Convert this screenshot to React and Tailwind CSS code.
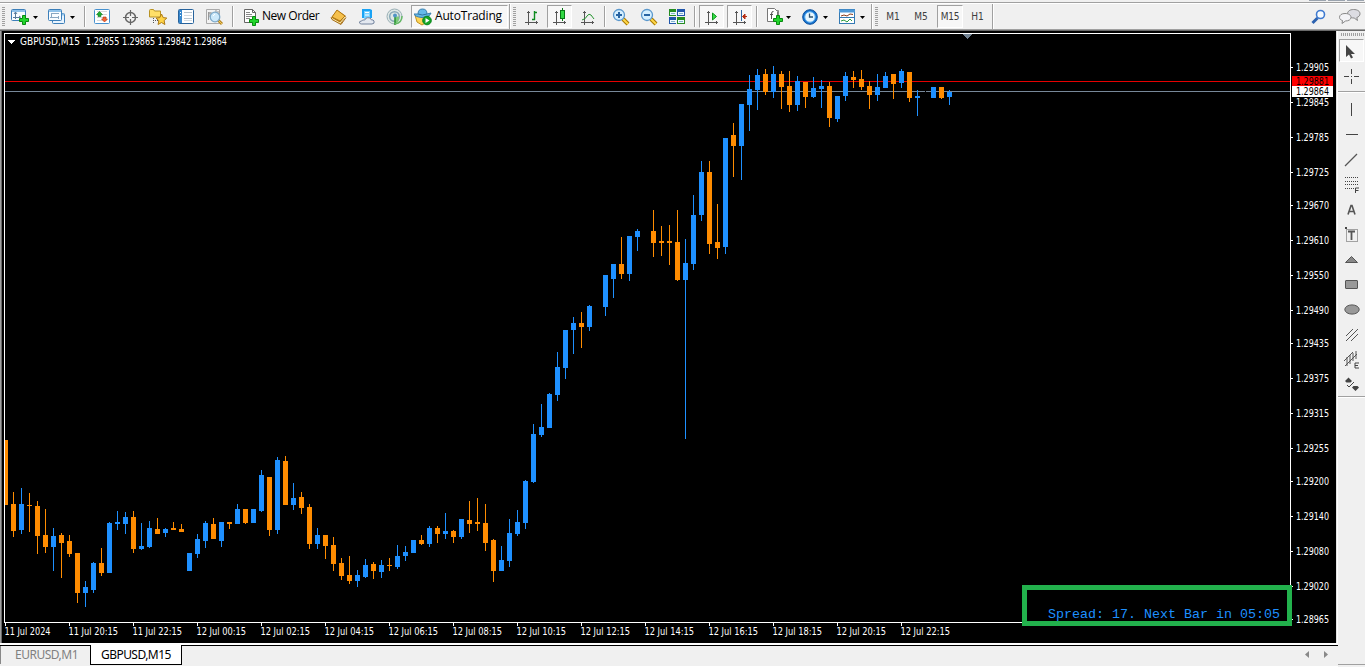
import React from "react";

/* Candles: [slot, colour, high, low, bodyTop, bodyBottom] */
const CANDLES = [
  [1,"o",492,537,504,531],[2,"b",488,534,504,530],[3,"o",493,532,505,506],
  [4,"o",501,554,506,536],[5,"o",509,553,535,547],[6,"b",528,571,536,547],[7,"o",533,578,535,543],
  [8,"o",535,557,541,554],[9,"o",553,603,553,593],[10,"b",581,607,587,593],[11,"b",562,593,563,590],
  [12,"o",548,576,563,573],[13,"b",522,573,523,573],[14,"b",511,530,522,524],[15,"b",512,534,517,524],
  [16,"o",511,553,517,549],[17,"b",523,550,546,549],[18,"b",521,548,528,547],[19,"o",518,534,529,534],
  [20,"b",528,537,529,533],[21,"o",522,530,528,530],[22,"o",524,532,529,532],[23,"b",553,571,553,571],
  [24,"b",534,558,539,554],[25,"b",521,548,523,541],[26,"o",518,539,524,539],[27,"b",522,547,522,541],
  [28,"o",522,529,522,524],[29,"b",504,524,509,524],[30,"o",509,524,509,523],[31,"b",509,523,509,523],
  [32,"b",470,512,475,511],[33,"o",477,536,477,530],[34,"b",457,534,460,530],[35,"o",456,505,461,505],
  [36,"b",483,510,498,505],[37,"o",492,514,497,508],[38,"o",504,549,507,544],[39,"b",528,549,535,544],
  [40,"o",535,559,535,546],[41,"o",537,571,545,564],[42,"o",558,580,563,576],[43,"o",556,584,575,581],
  [44,"b",570,587,575,581],[45,"b",559,578,565,577],[46,"o",562,579,564,571],[47,"b",560,578,565,572],
  [48,"o",558,571,565,566],[49,"b",545,569,556,567],[50,"b",546,561,552,556],[51,"b",540,553,540,553],
  [52,"o",535,545,540,544],[53,"b",526,547,528,544],[54,"o",526,543,528,534],[55,"b",513,539,531,534],
  [56,"o",530,543,531,537],[57,"b",519,539,519,537],[58,"o",501,533,520,524],[59,"o",498,531,522,524],
  [60,"o",504,551,523,543],[61,"o",539,582,540,571],[62,"b",546,571,560,571],[63,"b",519,567,533,561],
  [64,"b",510,536,522,534],[65,"b",480,529,481,523],[66,"b",424,483,434,482],[67,"b",404,437,427,435],
  [68,"b",393,428,394,428],[69,"b",352,401,367,395],[70,"b",330,379,330,368],[71,"b",317,354,323,330],
  [72,"o",312,348,323,327],[73,"b",305,331,306,327],[75,"b",275,316,275,307],[76,"b",264,298,264,279],
  [77,"o",237,279,264,274],[78,"b",236,281,236,274],[79,"b",229,251,231,237],[81,"o",210,257,231,243],
  [82,"o",226,256,241,243],[83,"o",225,265,241,243],[84,"o",210,281,242,280],[85,"b",239,439,263,280],
  [86,"b",195,270,215,264],[87,"b",161,221,172,215],[88,"o",161,254,172,244],[89,"o",204,259,242,248],
  [90,"b",138,254,138,247],[91,"o",123,177,135,146],[92,"b",104,180,104,146],[93,"b",75,131,89,105],
  [94,"b",69,110,75,90],[95,"o",69,95,74,92],[96,"b",66,98,74,92],[97,"o",71,109,74,87],
  [98,"o",71,112,86,105],[99,"b",76,111,81,105],[100,"o",82,108,82,97],[101,"b",77,98,88,97],
  [102,"b",80,108,86,89],[103,"o",82,127,86,118],[104,"b",96,122,96,119],[105,"b",72,101,76,96],
  [106,"o",71,88,77,80],[107,"o",70,90,79,87],[108,"o",81,109,86,95],[109,"b",74,101,87,95],
  [110,"b",72,88,76,88],[111,"o",74,99,74,84],[112,"b",69,88,71,83],[113,"o",72,102,72,98],
  [114,"b",90,116,96,98],[116,"b",87,98,87,98],[117,"o",87,99,87,98],[118,"b",90,105,92,97],
];
const COLOR = { o: "#ff8c00", b: "#1e90ff" };

const PRICES = [
  [67,"1.29905"],[102,"1.29845"],[137,"1.29785"],[172,"1.29725"],[205,"1.29670"],[240,"1.29610"],
  [275,"1.29550"],[310,"1.29490"],[343,"1.29435"],[378,"1.29375"],[413,"1.29315"],[448,"1.29255"],
  [481,"1.29200"],[516,"1.29140"],[551,"1.29080"],[586,"1.29020"],[619,"1.28965"],
];
const TIMES = [
  "11 Jul 2024","11 Jul 20:15","11 Jul 22:15","12 Jul 00:15","12 Jul 02:15","12 Jul 04:15","12 Jul 06:15",
  "12 Jul 08:15","12 Jul 10:15","12 Jul 12:15","12 Jul 14:15","12 Jul 16:15","12 Jul 18:15","12 Jul 20:15","12 Jul 22:15",
];

function Label({ x, y, w, fill = "#fff", children }) {
  return (
    <text x={x} y={y} textLength={w} lengthAdjust="spacingAndGlyphs" fill={fill} className="font-['DejaVu_Sans_Condensed','DejaVu_Sans',sans-serif] text-[10.5px]">
      {children}
    </text>
  );
}

function Chart() {
  return (
    <svg width="1335" height="612" viewBox="2 31 1335 612" className="block" shapeRendering="crispEdges">
      <rect x="2" y="31" width="1335" height="612" fill="#000" />
      <rect x="5" y="81" width="1285" height="1" fill="#e60000" />
      <rect x="5" y="91" width="1285" height="1" fill="#778899" />
      <rect x="925" y="91" width="1" height="1" fill="#000" />
      <rect x="5" y="440" width="3" height="65" fill="#ff8c00" />
      {CANDLES.map(([i, c, hi, lo, top, bot]) => (
        <g key={i} fill={COLOR[c]}>
          <rect x={5 + 8 * i} y={hi} width="1" height={lo - hi} />
          <rect x={3 + 8 * i} y={top} width="5" height={bot - top} />
        </g>
      ))}
      <path d="M4 33h1287v1H4zM4 33h1v590H4zM1290 33h1v590h-1zM4 622h1287v1H4z" fill="#fff" />
      <path d="M962 34h10l-5 5z" fill="#708090" />
      <path d="M8 40h7l-3.5 4z" fill="#fff" />
      <Label x="20" y="45" w="60">GBPUSD,M15</Label>
      <Label x="86" y="45" w="141">1.29855 1.29865 1.29842 1.29864</Label>
      {PRICES.map(([y, t]) => (
        <g key={t}>
          <rect x="1291" y={y} width="2" height="1" fill="#fff" />
          <Label x="1296" y={y + 4} w="33">{t}</Label>
        </g>
      ))}
      <rect x="1292" y="76" width="41" height="10" fill="#f00" />
      <Label x="1296" y="85" w="33" fill="#000">1.29881</Label>
      <rect x="1292" y="86" width="41" height="11" fill="#fff" />
      <Label x="1296" y="95" w="33" fill="#000">1.29864</Label>
      {TIMES.map((t, i) => (
        <g key={i}>
          <rect x={5 + 64 * i} y="623" width="1" height="3" fill="#fff" />
          <Label x={4.5 + 64 * i} y="635" w={i === 0 ? 46 : 49.5}>{t}</Label>
        </g>
      ))}
      <rect x="1024.5" y="587.5" width="265" height="36" fill="none" stroke="#22b14c" strokeWidth="5" />
      <text x="1048" y="618" textLength="232" fill="#1e90ff" className="font-['Liberation_Mono',monospace] text-[13.33px]">
        Spread: 17. Next Bar in 05:05
      </text>
    </svg>
  );
}

function Icon({ className = "", children, w = 18, h = 18 }) {
  return (
    <svg width={w} height={h} viewBox={`0 0 ${w} ${h}`} className={`block shrink-0 ${className}`} fill="none">
      {children}
    </svg>
  );
}
const Plus = ({ x = 8, y = 7 }) => (
  <path transform={`translate(${x} ${y})`} d="M3.5.5h3v3h3v3h-3v3h-3v-3h-3v-3h3z" fill="#22d52c" stroke="#078a10" />
);
const Caret = ({ className }) => (
  <Icon w={7} h={18} className={className}><path d="M1 8h5L3.5 11z" fill="#000" /></Icon>
);
const Sep = ({ className }) => <div className={`h-[21px] w-[2px] shrink-0 border-l border-[#a0a0a0] bg-white ${className}`} />;
const Edge = ({ className }) => <div className={`h-[26px] w-[2px] shrink-0 border-l border-[#a0a0a0] bg-white ${className}`} />;
const Grip = ({ className }) => (
  <Icon w={3} h={19} className={className}>
    <path d="M1.5 0v19" stroke="#a0a0a0" strokeWidth="3" strokeDasharray="1 1" />
  </Icon>
);
const Pressed = ({ className, children }) => (
  <div className={`flex h-[23px] shrink-0 items-center border border-t-[#a0a0a0] border-l-[#a0a0a0] border-r-white border-b-white bg-[#f7f7f7] ${className}`}>
    {children}
  </div>
);
const Axes = ({ children, className }) => (
  <Icon className={className}>
    <path d="M4.5 3v14M1 14.5h13" stroke="#555" />
    <path d="M3 4.500h3M12.500 13v3" stroke="#555" />
    {children}
  </Icon>
);
const Page = () => (
  <>
    <path d="M2.5 1.5h8l3 3v10h-11z" fill="#fff" stroke="#666" />
    <path d="M10.500 1.500v3h3" stroke="#666" />
    <path d="M4 6.500h6M4 8.500h6M4 10.500h4M4 4.500h4" stroke="#888" />
  </>
);
const Zoom = ({ plus, className }) => (
  <Icon className={className}>
    <path d="M11 11l5 5" stroke="#a87800" strokeWidth="4" />
    <path d="M11 11l5 5" stroke="#ffd84a" strokeWidth="2" />
    <circle cx="7" cy="7" r="5.5" fill="#d5efff" stroke="#5b98cd" strokeWidth="1.3" />
    <path d={plus ? "M4 7h6M7 4v6" : "M4 7h6"} stroke="#2864a3" strokeWidth="2" />
  </Icon>
);

function Toolbar() {
  return (
    <header className="flex h-[31px] w-full flex-col bg-[#f0f0f0]">
      <div className="flex h-[2px] justify-end gap-[2px] pr-px">
        <i className="h-px w-[17px] bg-[#9aa3ae]" /><i className="h-px w-[17px] bg-[#9aa3ae]" /><i className="h-px w-[17px] bg-[#9aa3ae]" />
      </div>
      <div className="h-px bg-[#a0a0a0]" />
      <div className="h-px bg-white" />
      <div className="flex h-[25px] items-center">
        <Grip className="ml-[2px]" />
        <Icon className="ml-[6px]">
          <rect x=".5" y="1.500" width="14" height="11" rx="1" fill="#f8fcff" stroke="#3c7fb9" /><path d="M1 3h13" stroke="#8fc2ea" strokeWidth="2" />
          <path d="M3 6l1.500-2L6 6M4.500 4v7M2 9.500h7M8 8l2 1.500" stroke="#587c9c" />
          <Plus />
        </Icon>
        <Caret className="ml-[3px]" />
        <Icon className="ml-[9px]">
          <rect x="4.500" y="5.500" width="12" height="10" rx="1" fill="#e8f4ff" stroke="#3c7fb9" />
          <rect x=".5" y="1.500" width="13" height="11" rx="1" fill="#f8fcff" stroke="#3c7fb9" /><path d="M1 3h12M14 6.500h2" stroke="#8fc2ea" strokeWidth="2" />
          <path d="M3.500 5v5M2 9.500h9M4 5.500h7M10.500 8v3" stroke="#88a7c2" />
        </Icon>
        <Caret className="ml-[3px]" />
        <Sep className="ml-[8px]" />
        <Icon className="ml-[7px]">
          <rect x="1.500" y="1.500" width="15" height="14" rx="1" fill="#fff" stroke="#4691cf" />
          <path d="M4 3.500h10M4 6.500h10M4 9.500h10M4 12.500h10" stroke="#d8d8d8" />
          <path d="M6.500 3.500L9.500 6.500H8v2H5v-2H3.500z" fill="#20ac30" stroke="#087817" strokeWidth=".6" />
          <path d="M11.500 14l3-3H13V9h-3v2H8.500z" fill="#f46432" stroke="#b7340c" strokeWidth=".6" />
        </Icon>
        <Icon className="ml-[11px]">
          <circle cx="8.500" cy="9.500" r="5" stroke="#666" strokeWidth="1.500" />
          <path d="M8.500 2v6M8.500 11v6M1 9.500h6M10 9.500h6" stroke="#666" strokeWidth="1.200" />
        </Icon>
        <Icon className="ml-[9px]">
          <path d="M.5 2.500q0-1 1-1h3l1 1.500h6v6h-11z" fill="#ffdf68" stroke="#b89324" />
          <path d="M4.500 10v6M6 12.500h3" stroke="#555" strokeDasharray="1 1" />
          <path d="M12.500 6l1.700 3.600 3.600.5-2.700 2.500.8 3.900-3.400-2-3.400 2 .7-3.900L7 10.100l3.800-.5z" fill="#ffd447" stroke="#ad7a13" />
        </Icon>
        <Icon className="ml-[10px]">
          <rect x="1.500" y="1.500" width="15" height="14" rx="1" fill="#fff" stroke="#27639c" />
          <rect x="2" y="2" width="3" height="13" fill="#3888ce" />
          <path d="M7 4.500h8M7 10.500h8" stroke="#b6c3ce" /><path d="M7 7.500h8M7 12.500h8" stroke="#d5dbe0" />
          <path d="M3 4.500h1M3 7.500h1" stroke="#fff" />
        </Icon>
        <Icon className="ml-[11px]">
          <path d="M.5 1.500h13v14H.5z" fill="#f2f2f2" stroke="#aaa" /><path d="M2.500 12V4M4 9V4M10 5V2M12 8V3M2 5h4" stroke="#999" />
          <path d="M12 12l4 4" stroke="#b58727" strokeWidth="3" /><path d="M12 12l4 4" stroke="#f2ca59" />
          <circle cx="9" cy="9" r="4.800" fill="#cde9fa" stroke="#7da9c9" strokeWidth="1.300" /><path d="M7 8l2-2" stroke="#fff" />
        </Icon>
        <Sep className="ml-[8px]" />
        <Icon className="ml-[8px]"><Page /><Plus x={7} y={8} /></Icon>
        <span className="ml-[2px] w-[58px] shrink-0 whitespace-nowrap pb-px font-['Open_Sans','Noto_Sans',sans-serif] text-[12px] leading-4 tracking-[-0.46px] text-black">New Order</span>
        <Icon className="ml-[10px]">
          <path d="M1 10l6-8 9 6-5 8z" fill="#b27816" /><path d="M2 9l5-7 8 6-5 5z" fill="#f5c04c" stroke="#b27914" />
          <path d="M2 10.500l8 4.500 5-6" stroke="#fff0b0" /><path d="M1 9.500l1 2 9 5 5-7" stroke="#a46b10" />
        </Icon>
        <Icon className="ml-[10px]">
          <path d="M4 1l8 0 2 1v8H4z" fill="#1aa3f5" /><path d="M6 3h6v8H6z" fill="#75cfff" /><path d="M7 4.500h4M7 7h4" stroke="#fff" />
          <path d="M3.500 16h10.500q3-.3 2-3-.7-1.600-2.500-1-1-3-4-2.300-2 .2-2.700 2.300Q4 11.500 3.700 13 1 13 1.500 15q.5 1 2 1z" fill="#e3e8f0" stroke="#73839d" />
        </Icon>
        <Icon className="ml-[10px]">
          <circle cx="8.500" cy="8.500" r="7.500" fill="#dfe8e6" stroke="#9aafb5" /><circle cx="8.500" cy="8.500" r="4.800" stroke="#8ba9b8" strokeWidth="1.500" />
          <path d="M9 8.500h4q1 5-4 8z" fill="#7cc97b" /><path d="M9 7v10" stroke="#289331" strokeWidth="1.500" /><circle cx="9" cy="7.500" r="2" fill="#5195c5" />
          <path d="M9 16q7-1 7-8" stroke="#66ba66" strokeWidth="1.500" />
        </Icon>
        <Pressed className="ml-[7px] w-[97px]">
          <Icon className="ml-[2px]">
            <path d="M1 7h14l-2 7-5 3-5-3z" fill="#ffd457" stroke="#c09423" />
            <path d="M0 6q1 3 8 3.500Q16 9 17 5l-4 1q0-5-4.500-5Q4 1 4 6z" fill="#66b9ea" stroke="#397fae" /><path d="M4 6q4 2 9 0" stroke="#2f749f" />
            <circle cx="13" cy="12.500" r="4.300" fill="#16a525" stroke="#08851b" /><path d="M11.500 10v5l4-2.500z" fill="#fff" />
          </Icon>
          <span className="ml-[3px] whitespace-nowrap pb-px font-['Open_Sans','Noto_Sans',sans-serif] text-[12px] leading-4 tracking-[-0.18px] text-black">AutoTrading</span>
        </Pressed>
        <Edge className="ml-px" />
        <Grip className="ml-[2px]" />
        <Axes className="ml-[8px]"><path d="M10.500 3v9M10 4.500h3M8 11.500h3" stroke="#0d8b1e" strokeWidth="1.400" /></Axes>
        <Pressed className="ml-[5px] w-[25px]"><Axes className="ml-[4px]"><path d="M10.500 0v13" stroke="#077714" /><rect x="8.500" y="2.500" width="4" height="8" fill="#31d843" stroke="#077714" /></Axes></Pressed>
        <Axes className="ml-[8px]"><path d="M2 12q4-1 5-4 2-3 4-1l3 4" stroke="#25942f" /></Axes>
        <Sep className="ml-[6px]" />
        <Zoom plus className="ml-[6px]" />
        <Zoom className="ml-[10px]" />
        <Icon className="ml-[10px]">
          <path d="M1 1h8v7H1z" fill="#268d22" /><path d="M9 1h8v7H9zM1 9h8v7H1z" fill="#2056ac" />
          <path d="M9 9h8v7H9z" fill="#268d22" />
          <path d="M2 4h6v3H2zM10 4h6v3h-6zM2 12h6v3H2zM10 12h6v3h-6z" fill="#eef8ff" />
          <path d="M3 5.500h4M11 5.500h4M3 13.500h4M11 13.500h4" stroke="#83b3cb" />
          <path d="M8.500 1v15" stroke="#f0f0f0" />
        </Icon>
        <Sep className="ml-[8px]" />
        <Pressed className="ml-[3px] w-[25px]"><Axes className="ml-[4px]"><path d="M8.500 5v7l4-3.500z" fill="#36dc47" stroke="#0a951a" /></Axes></Pressed>
        <Pressed className="ml-[3px] w-[25px]"><Axes className="ml-[4px]"><path d="M9.500 2v11" stroke="#3165a0" /><path d="M15 8.500h-4M13 6l-2.500 2.500L13 11z" fill="#c63718" stroke="#b42c13" /></Axes></Pressed>
        <Sep className="ml-[4px]" />
        <Icon className="ml-[7px]"><path d="M4.500 2.500h9v11h-9z" fill="#fff" stroke="#888" /><path d="M2.500.5h7l3 3v10h-10z" fill="#fff" stroke="#777" /><path d="M8.500 3.500Q6.500 3 6.500 6v5M5 6.500h3" stroke="#555" /><Plus x={8} y={7} /></Icon>
        <Caret className="ml-[2px]" />
        <Icon className="ml-[9px]">
          <circle cx="9" cy="9" r="7.300" fill="#1673d0" stroke="#0c519d" /><circle cx="9" cy="9" r="5.200" fill="#e8f7ff" stroke="#66b5f2" /><path d="M8.500 5.500V9H12" stroke="#31536e" strokeWidth="1.300" />
        </Icon>
        <Caret className="ml-[3px]" />
        <Icon className="ml-[9px]">
          <rect x="1.500" y="1.500" width="15" height="14" fill="#fff" stroke="#347ab4" /><path d="M1 3h16" stroke="#4d99d8" strokeWidth="3" />
          <path d="M3 8l3-1 3 1 3-2 3 .5" stroke="#8b3d1c" /><path d="M2 9.500h14" stroke="#347ab4" /><path d="M3 13l3-1 3 2 3-3 2 2" stroke="#2a9b3c" />
        </Icon>
        <Caret className="ml-[3px]" />
        <Edge className="ml-[5px]" />
        <Grip className="ml-[2px]" />
        <div className="flex shrink-0 items-center text-center font-['DejaVu_Sans_Condensed','DejaVu_Sans',sans-serif] text-[10px] leading-[21px] text-[#404040]">
          <span className="ml-[3px] w-[24px]">M1</span>
          <span className="ml-[4px] w-[24px]">M5</span>
          <Pressed className="ml-[4px] w-[26px] justify-center"><span className="tracking-[-0.2px]">M15</span></Pressed>
          <span className="ml-[2px] w-[25px]">H1</span>
        </div>
        <Edge className="ml-[2px]" />
        <Icon className="ml-auto"><path d="M1.500 15l5-5" stroke="#2d62b0" strokeWidth="3" /><circle cx="9.500" cy="6.500" r="4" fill="#f6fbff" stroke="#3f7ad0" strokeWidth="1.600" /></Icon>
        <Icon w={24} className="ml-[9px] mr-[3px]">
          <path d="M15.500 1.500c4 0 6.500 1.700 6.500 4.300 0 2-1.500 3.200-3.200 3.700l.7 3-3.300-2.500C12 10 9.500 8.400 9.500 5.800S12 1.500 15.500 1.500z" fill="#dcdce2" stroke="#888" />
          <path d="M7 5.500c3.500 0 6 1.500 6 3.800S10.500 13 7.500 13L4 15.500l.5-3C2.700 12 1.500 11 1.500 9.300c0-2.300 2.200-3.800 5.500-3.800z" fill="#f4f4f7" stroke="#888" />
        </Icon>
      </div>
      <div className="h-px bg-[#a0a0a0]" />
      <div className="h-px bg-[#696969]" />
    </header>
  );
}

const Tool = ({ children }) => <Icon w={18} h={25}>{children}</Icon>;

function DrawingTools() {
  return (
    <aside className="flex w-[27px] shrink-0 flex-col items-center bg-[#f0f0f0]">
      <Icon w={24} h={3} className="mt-[2px] ml-[2px]"><path d="M0 1.500h24" stroke="#a0a0a0" strokeWidth="3" strokeDasharray="1 1" /></Icon>
      <Pressed className="mt-[3px] w-[25px] justify-center">
        <Icon w={12} h={18} className="mr-[3px]"><path d="M2 3v12l3-2.500 2 4 2-1-2-3.500h4z" fill="#444" /></Icon>
      </Pressed>
      <div className="mt-[5px] mr-[2px]"><Icon><path d="M9.500 2v5M9.500 12v5M2 9.500h5M12 9.500h5M9 9.500h1" stroke="#444" /></Icon></div>
      <div className="mt-[6px] h-[2px] w-full border-t border-[#a0a0a0] bg-white" />
      <div className="mt-[4px] mr-[2px] flex flex-col">
        <Tool><path d="M9.500 6v13" stroke="#444" /></Tool>
        <Tool><path d="M4 12.500h12" stroke="#444" /></Tool>
        <Tool><path d="M3 19L15 7" stroke="#555" strokeWidth="1.300" /></Tool>
        <Tool>
          <path d="M3 5.500h13M3 9.500h13M3 12.500h13M3 16.500h9" stroke="#444" strokeDasharray="1 1" />
          <path d="M13.500 21v-5H17M13.500 18.500h3" stroke="#444" />
        </Tool>
        <Tool><path d="M6 17.500L9 8.500h1l3 9M7 14.500h5" stroke="#555" strokeWidth="1.600" /></Tool>
        <Tool><rect x="4.500" y="7.500" width="11" height="12" stroke="#555" strokeDasharray="1 1" /><path d="M3 5h2v2H3z" fill="#444" /><path d="M6 9.500h7M9.500 9v9" stroke="#555" strokeWidth="1.800" /></Tool>
        <Tool><path d="M3.500 15.500h12l-6-6z" fill="#888" stroke="#555" /></Tool>
        <Tool><rect x="3.500" y="8.500" width="12" height="8" rx=".5" fill="#999" stroke="#555" /></Tool>
        <Tool><ellipse cx="10" cy="12.500" rx="7.200" ry="4.600" fill="#999" stroke="#555" /></Tool>
        <Tool><path d="M4 14l7-7M4 19L16 7M9 19l7-7" stroke="#555" /></Tool>
        <Tool><path d="M2 14l9-9M3 19L15 7M5 10v9M8 8v9M11 6v8M14 4v8" stroke="#555" /><path d="M17 16h-4v5h4M13 18.500h3" stroke="#444" /></Tool>
        <Tool><path d="M3 9l3.500-3.500L10 9l-1.500 1.500h-4zM10 15.500l1.500-1.500h4l1.500 1.500-3.500 3.500z" fill="#444" /><path d="M5 13l2 2 5-5" stroke="#444" /></Tool>
      </div>
      <div className="-mt-px h-[2px] w-full border-t border-[#a0a0a0] bg-white" />
    </aside>
  );
}

function Tabs() {
  return (
    <div className="flex h-[24px] w-[1338px] flex-col border-b border-white bg-[#f0f0f0]">
      <div className="h-[2px] bg-white" />
      <div className="flex h-[20px] border-t border-black font-['Noto_Sans','Open_Sans',sans-serif] text-[12px] leading-[17px]">
        <div className="h-[18px] w-[90px] border-l border-[#888] pl-[14px] tracking-[-0.5px] text-[#808080]">EURUSD,M1</div>
        <div className="-mt-px h-[20px] w-[92px] border border-t-0 border-black bg-white pl-[10px] pt-px tracking-[-0.55px] text-black">GBPUSD,M15</div>
        <div className="ml-auto flex pt-[5px] pr-[9px]">
          <Icon w={5} h={8}><path d="M4 0v7L0 3.500z" fill="#888" /></Icon>
          <Icon w={5} h={8} className="ml-[14px]"><path d="M0 0v7l4-3.500z" fill="#888" /></Icon>
        </div>
      </div>
    </div>
  );
}

export default function App() {
  return (
    <div className="flex h-[667px] w-[1365px] flex-col overflow-hidden bg-[#f0f0f0]">
      <Toolbar />
      <div className="flex h-[636px]">
        <div className="flex w-[1338px] shrink-0 flex-col">
          <div className="flex h-[612px]">
            <div className="w-[2px] border-l border-[#a0a0a0] bg-[#696969]" />
            <div className="h-full w-[1334px] overflow-hidden bg-black"><Chart /></div>
            <div className="w-[2px] border-l border-[#e3e3e3] bg-white" />
          </div>
          <Tabs />
        </div>
        <div className="flex w-[27px] flex-col">
          <div className="h-[633px]"><DrawingTools /></div>
          <div className="h-px bg-[#a0a0a0]" />
        </div>
      </div>
    </div>
  );
}
